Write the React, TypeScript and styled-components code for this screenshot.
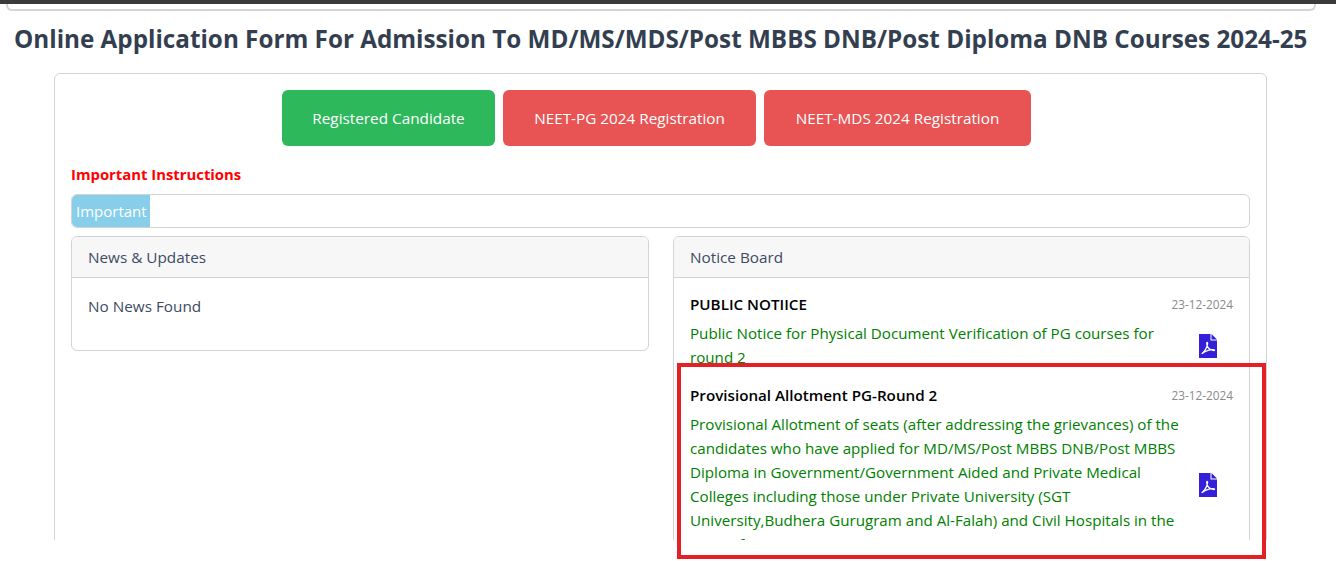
import { FC } from 'react'
import styled, { createGlobalStyle } from 'styled-components'

const GlobalStyle = createGlobalStyle`
  html, body {
    margin: 0;
    padding: 0;
    background: #fff;
  }
  body {
    font-family: "Open Sans", "Noto Sans", "Liberation Sans", sans-serif;
    font-size: 16px;
    color: #3c4b64;
  }
`

const Screen = styled.div`
  position: relative;
  height: 561px;
  overflow: hidden;
`

const Page = styled.div`
  height: 540px;
  overflow: hidden;
`

const TopBar = styled.div`
  height: 4px;
  background: #3a3a3a;
`

const NavStub = styled.div`
  height: 5px;
  margin: 0 20px 0 6px;
  border: 2px solid #d4d4d4;
  border-top: 0;
  border-radius: 0 0 6px 6px;
`

const Title = styled.h1`
  margin: 13px 0 0 14px;
  font-size: 24.25px;
  line-height: 30px;
  font-weight: 700;
  color: #333f50;
  white-space: nowrap;
`

const Panel = styled.div`
  margin: 19px 69px 0 54px;
  padding: 16px;
  border: 1px solid #d3d3d3;
  border-radius: 6px;
`

const ButtonRow = styled.div`
  display: flex;
  justify-content: center;
  gap: 8px;
  padding-right: 8px;
`

const Btn = styled.button<{ $tone: 'green' | 'red'; $width: number }>`
  width: ${({ $width }) => $width}px;
  height: 56px;
  border: 0;
  border-radius: 6px;
  background: ${({ $tone }) => ($tone === 'green' ? '#2eb85c' : '#e85454')};
  color: #fff;
  font-family: inherit;
  font-size: 15.3px;
  padding: 0;
`

const InstructionsLabel = styled.div`
  margin-top: 17px;
  font-size: 14.85px;
  line-height: 22px;
  font-weight: 700;
  color: #ff0000;
`

const TickerBox = styled.div`
  display: flex;
  height: 32px;
  margin-top: 9px;
  border: 1px solid #d3d3d3;
  border-radius: 6px;
  overflow: hidden;
`

const TickerBadge = styled.span`
  width: 78px;
  padding-left: 4px;
  box-sizing: border-box;
  background: #87ceeb;
  color: #fff;
  font-size: 15px;
  line-height: 33px;
  white-space: nowrap;
`

const Columns = styled.div`
  display: grid;
  grid-template-columns: 578px 577px;
  gap: 24px;
  margin-top: 8px;
  align-items: start;
`

const Card = styled.div`
  border: 1px solid #d3d3d3;
  border-radius: 6px;
  overflow: hidden;
`

const CardHeader = styled.div`
  height: 40px;
  padding: 0 16px;
  background: #f7f7f7;
  border-bottom: 1px solid #d3d3d3;
  font-size: 15.3px;
  line-height: 40px;
`

const CardBody = styled.div`
  padding: 16px 16px 32px;
  font-size: 15.3px;
  line-height: 24px;
`

const NoticeList = styled.div`
  padding: 14px 16px 0;
`

const Notice = styled.div`
  margin-bottom: 14px;
`

const NoticeHead = styled.div`
  display: flex;
  justify-content: space-between;
  align-items: center;
  height: 24px;
`

const NoticeTitle = styled.span`
  font-size: 15.2px;
  font-weight: 600;
  color: #000;
`

const NoticeDate = styled.span`
  font-size: 11.8px;
  color: #8a8a8a;
`

const NoticeRow = styled.div`
  display: flex;
  align-items: center;
  margin-top: 5px;
`

const NoticeText = styled.p`
  width: 493px;
  margin: 0;
  font-size: 15.16px;
  line-height: 24px;
  color: #008000;
`

const PdfLink = styled.a`
  display: block;
  margin: 2px 0 0 16px;
  height: 24px;
  color: #3420d8;
`

const Highlight = styled.div`
  position: absolute;
  left: 677px;
  top: 363px;
  width: 589px;
  height: 196px;
  box-sizing: border-box;
  border: 4px solid #e61e25;
  pointer-events: none;
`

const PdfIcon: FC = () => (
  <svg width="18" height="24" viewBox="0 0 18 24" fill="none">
    <path d="M0 0H11.5V6.5H18V24H0Z" fill="currentColor" />
    <path d="M12.5 0L18 5.5H12.5Z" fill="currentColor" />
    <path
      d="M3 19.5C5.5 18 8.2 13.5 8.6 9.5C8.7 8 7.6 8 7.7 9.8C8 13 10.5 16 15 16.6C16 16.4 15.4 15.6 14 15.6C10.5 15.7 6.5 17 3.6 19.2"
      stroke="#fff"
      strokeWidth="1.3"
      strokeLinecap="round"
    />
  </svg>
)

const notices = [
  {
    title: 'PUBLIC NOTIICE',
    date: '23-12-2024',
    text: 'Public Notice for Physical Document Verification of PG courses for round 2',
  },
  {
    title: 'Provisional Allotment PG-Round 2',
    date: '23-12-2024',
    text: 'Provisional Allotment of seats (after addressing the grievances) of the candidates who have applied for MD/MS/Post MBBS DNB/Post MBBS Diploma in Government/Government Aided and Private Medical Colleges including those under Private University (SGT University,Budhera Gurugram and Al-Falah) and Civil Hospitals in the State of Haryana',
  },
]

const App: FC = () => (
  <Screen>
    <GlobalStyle />
    <Page>
      <TopBar />
      <NavStub />
      <Title>Online Application Form For Admission To MD/MS/MDS/Post MBBS DNB/Post Diploma DNB Courses 2024-25</Title>
      <Panel>
        <ButtonRow>
          <Btn $tone="green" $width={213}>Registered Candidate</Btn>
          <Btn $tone="red" $width={253}>NEET-PG 2024 Registration</Btn>
          <Btn $tone="red" $width={267}>NEET-MDS 2024 Registration</Btn>
        </ButtonRow>
        <InstructionsLabel>Important Instructions</InstructionsLabel>
        <TickerBox>
          <TickerBadge>Important</TickerBadge>
        </TickerBox>
        <Columns>
          <Card>
            <CardHeader>News &amp; Updates</CardHeader>
            <CardBody>No News Found</CardBody>
          </Card>
          <Card>
            <CardHeader>Notice Board</CardHeader>
            <NoticeList>
              {notices.map((n) => (
                <Notice key={n.title}>
                  <NoticeHead>
                    <NoticeTitle>{n.title}</NoticeTitle>
                    <NoticeDate>{n.date}</NoticeDate>
                  </NoticeHead>
                  <NoticeRow>
                    <NoticeText>{n.text}</NoticeText>
                    <PdfLink>
                      <PdfIcon />
                    </PdfLink>
                  </NoticeRow>
                </Notice>
              ))}
            </NoticeList>
          </Card>
        </Columns>
      </Panel>
    </Page>
    <Highlight />
  </Screen>
)

export default App
